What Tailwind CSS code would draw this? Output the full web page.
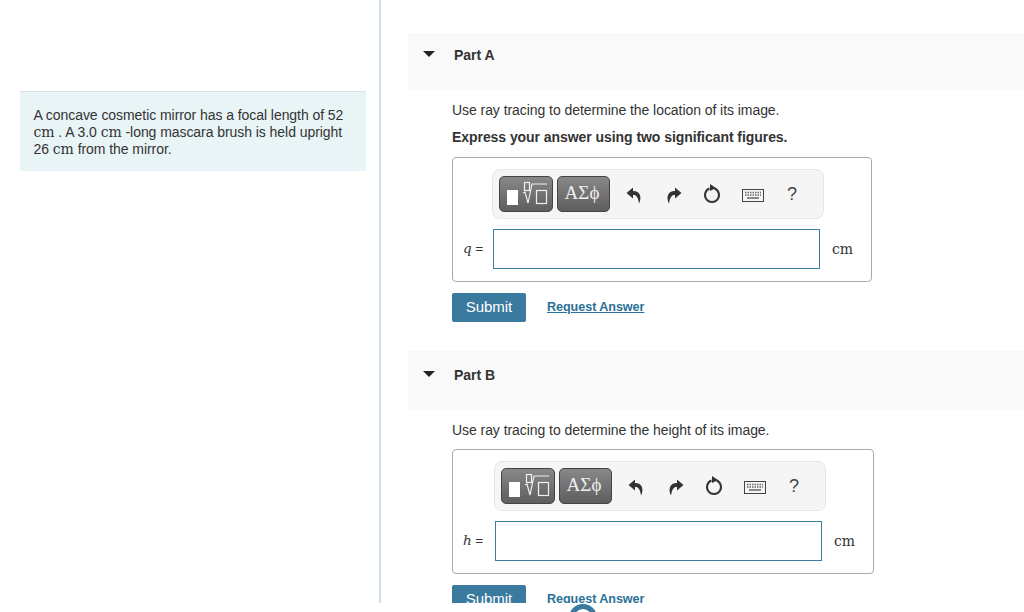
<!DOCTYPE html>
<html lang="en">
<head>
    <meta charset="UTF-8">
    <title>Part A and Part B</title>
    <script src="https://cdn.jsdelivr.net/npm/@tailwindcss/browser@4"></script>
</head>
<body class="bg-white text-[#333] font-['Liberation_Sans',Arial,sans-serif] text-[14px] tracking-[-0.06px] h-[612px] overflow-hidden relative">
    <div class="flex h-[603px] overflow-hidden">
        <!-- left column -->
        <aside class="w-[381px] shrink-0 border-r-2 border-[#cfdde9] pt-[91px] pl-[20px] pr-[13px]">
            <div class="h-[80px] bg-[#e9f4f7] border-t border-[#d5e2e8] pl-[14px] pt-[15px] text-[14px] leading-[17px]">
                <p class="-ml-[0.5px]">A concave cosmetic mirror has a focal length of 52<br>
                <span class="font-['DejaVu_Serif',serif] text-[14px]">cm</span> . A 3.0 <span class="font-['DejaVu_Serif',serif] text-[14px]">cm</span> -long mascara brush is held upright<br>
                26 <span class="font-['DejaVu_Serif',serif] text-[14px]">cm</span> from the mirror.</p>
            </div>
        </aside>

        <!-- parts -->
        <main class="flex-1 pl-[27px] pt-[33px]">
            <div class="h-[57px] bg-[#f9f9f9] flex items-start pl-[15px] pt-[13px]">
                <svg width="12" height="6" viewBox="0 0 12 6" class="mt-[5px]"><path d="M0 0H12L6 6Z" fill="#222"/></svg>
                <h2 class="ml-[19px] font-bold text-[14px] tracking-normal leading-[18px]">Part A</h2>
            </div>
            <div class="pl-[44px]">
                <p class="mt-[11px] leading-[18px]">Use ray tracing to determine the location of its image.</p>
                <p class="mt-[9px] font-bold leading-[18px]">Express your answer using two significant figures.</p>

                <div class="mt-[11px] w-[420px] h-[125px] border border-[#aaa] rounded-[4px] pt-[11px]">
                    <div class="ml-[39px] w-[332px] h-[50px] bg-[#f5f5f5] border border-[#e6e6e6] rounded-[8px] flex items-center pl-[6px]">
                        <button class="w-[54px] h-[36px] rounded-[5px] border border-[#444] bg-gradient-to-b from-[#888] to-[#5e5e5e]">
                            <svg width="52" height="34" viewBox="0 0 52 34" class="block"><rect x="7" y="13" width="11" height="15" fill="#fff"/><g fill="none" stroke="#f0f0f0" stroke-width="1.2"><rect x="24.5" y="5.5" width="5" height="8"/><rect x="36.5" y="13.5" width="10" height="13"/><path d="M23 16L25 15L28 26L32 7H47"/></g></svg>
                        </button>
                        <button class="ml-[4px] w-[53px] h-[36px] rounded-[5px] border border-[#444] bg-gradient-to-b from-[#888] to-[#5e5e5e] text-[#eee] font-['Liberation_Serif',serif] text-[19px] tracking-normal leading-[30px] pb-[3px] pr-[3px]">ΑΣϕ</button>
                        <svg width="16" height="17" viewBox="0 0 16 17" class="ml-[16px] mt-[2px]"><path d="M7 0.5L0.5 6L7 11.5V8C10 8 12 9.5 13 16.5C15.5 12 15.5 4 7 4Z" fill="#333"/></svg>
                        <svg width="16" height="17" viewBox="0 0 16 17" class="ml-[24px] mt-[2px]"><path d="M9 0.5L15.5 6L9 11.5V8C6 8 4 9.5 3 16.5C0.5 12 0.5 4 9 4Z" fill="#333"/></svg>
                        <svg width="18" height="20" viewBox="0 0 18 20" class="ml-[21px]"><path d="M6.5 4.5A7 7 0 1 0 11.5 4.5" fill="none" stroke="#333" stroke-width="2"/><path d="M7 0L13 4L7 7Z" fill="#333"/></svg>
                        <svg width="22" height="13" viewBox="0 0 22 13" class="ml-[21px] mt-[3px]"><rect x="0.5" y="0.5" width="21" height="12" fill="#f5f5f5" stroke="#444"/><path d="M3 3.5H19M3 6H19" stroke="#666" stroke-width="1.5" stroke-dasharray="1.5 1"/><path d="M5 9H17" stroke="#666" stroke-width="1.5"/></svg>
                        <span class="ml-[23px] text-[18px] leading-[20px] text-[#444]">?</span>
                    </div>
                    <div class="flex items-center mt-[10px] h-[40px]">
                        <span class="w-[40px] pl-[10px] text-[13.5px] whitespace-nowrap"><i class="font-['DejaVu_Serif',serif]">q</i> =</span>
                        <input type="text" class="w-[327px] h-[40px] border border-[#3b7ea1] bg-white">
                        <span class="ml-[12px] font-['DejaVu_Serif',serif] text-[14px]">cm</span>
                    </div>
                </div>

                <div class="flex items-center mt-[11px]">
                    <button class="w-[74px] h-[29px] bg-[#3a7a9e] rounded-[2px] text-white text-[15px]">Submit</button>
                    <a href="#" class="ml-[21px] text-[#2b7198] font-bold text-[12.6px] underline">Request Answer</a>
                </div>
            </div>

            <div class="mt-[29px] h-[59px] bg-[#f9f9f9] flex items-start pl-[15px] pt-[15px]">
                <svg width="12" height="6" viewBox="0 0 12 6" class="mt-[5px]"><path d="M0 0H12L6 6Z" fill="#222"/></svg>
                <h2 class="ml-[19px] font-bold text-[14px] tracking-normal leading-[18px]">Part B</h2>
            </div>
            <div class="pl-[44px]">
                <p class="mt-[11px] leading-[18px]">Use ray tracing to determine the height of its image.</p>

                <div class="mt-[10px] w-[422px] h-[125px] border border-[#aaa] rounded-[4px] pt-[11px]">
                    <div class="ml-[41px] w-[332px] h-[50px] bg-[#f5f5f5] border border-[#e6e6e6] rounded-[8px] flex items-center pl-[6px]">
                        <button class="w-[54px] h-[36px] rounded-[5px] border border-[#444] bg-gradient-to-b from-[#888] to-[#5e5e5e]">
                            <svg width="52" height="34" viewBox="0 0 52 34" class="block"><rect x="7" y="13" width="11" height="15" fill="#fff"/><g fill="none" stroke="#f0f0f0" stroke-width="1.2"><rect x="24.5" y="5.5" width="5" height="8"/><rect x="36.5" y="13.5" width="10" height="13"/><path d="M23 16L25 15L28 26L32 7H47"/></g></svg>
                        </button>
                        <button class="ml-[4px] w-[53px] h-[36px] rounded-[5px] border border-[#444] bg-gradient-to-b from-[#888] to-[#5e5e5e] text-[#eee] font-['Liberation_Serif',serif] text-[19px] tracking-normal leading-[30px] pb-[3px] pr-[3px]">ΑΣϕ</button>
                        <svg width="16" height="17" viewBox="0 0 16 17" class="ml-[16px] mt-[2px]"><path d="M7 0.5L0.5 6L7 11.5V8C10 8 12 9.5 13 16.5C15.5 12 15.5 4 7 4Z" fill="#333"/></svg>
                        <svg width="16" height="17" viewBox="0 0 16 17" class="ml-[24px] mt-[2px]"><path d="M9 0.5L15.5 6L9 11.5V8C6 8 4 9.5 3 16.5C0.5 12 0.5 4 9 4Z" fill="#333"/></svg>
                        <svg width="18" height="20" viewBox="0 0 18 20" class="ml-[21px]"><path d="M6.5 4.5A7 7 0 1 0 11.5 4.5" fill="none" stroke="#333" stroke-width="2"/><path d="M7 0L13 4L7 7Z" fill="#333"/></svg>
                        <svg width="22" height="13" viewBox="0 0 22 13" class="ml-[21px] mt-[3px]"><rect x="0.5" y="0.5" width="21" height="12" fill="#f5f5f5" stroke="#444"/><path d="M3 3.5H19M3 6H19" stroke="#666" stroke-width="1.5" stroke-dasharray="1.5 1"/><path d="M5 9H17" stroke="#666" stroke-width="1.5"/></svg>
                        <span class="ml-[23px] text-[18px] leading-[20px] text-[#444]">?</span>
                    </div>
                    <div class="flex items-center mt-[10px] h-[40px]">
                        <span class="w-[42px] pl-[10px] text-[13.5px] whitespace-nowrap"><i class="font-['DejaVu_Serif',serif]">h</i> =</span>
                        <input type="text" class="w-[327px] h-[40px] border border-[#3b7ea1] bg-white">
                        <span class="ml-[12px] font-['DejaVu_Serif',serif] text-[14px]">cm</span>
                    </div>
                </div>

                <div class="flex items-center mt-[11px]">
                    <button class="w-[74px] h-[29px] shrink-0 bg-[#3a7a9e] rounded-[2px] text-white text-[15px]">Submit</button>
                    <a href="#" class="ml-[21px] text-[#2b7198] font-bold text-[12.6px] underline">Request Answer</a>
                </div>
            </div>
        </main>
    </div>
    <!-- floating help button, cut off by the window -->
    <div class="absolute left-[569px] top-[604px] w-[28px] h-[28px] rounded-full border-[5px] border-[#3a7a9e] bg-white"></div>
</body>
</html>
